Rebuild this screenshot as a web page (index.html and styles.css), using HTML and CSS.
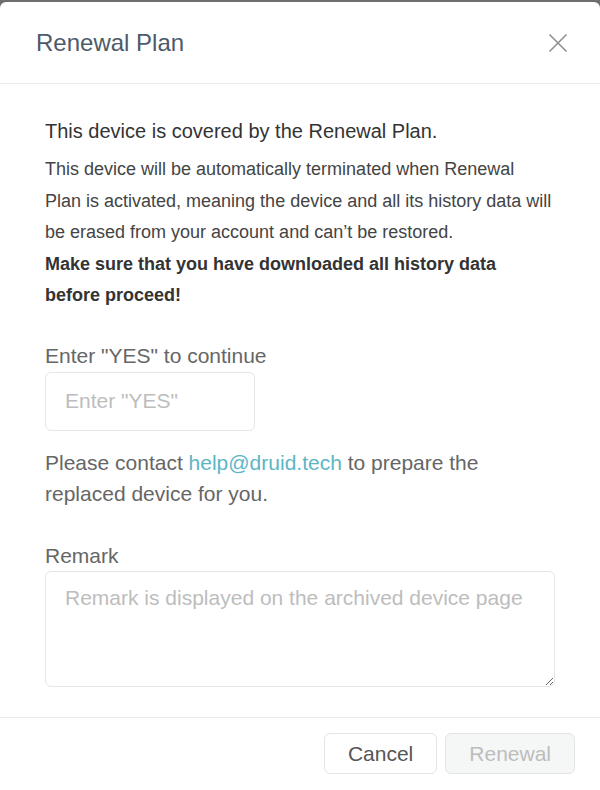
FILE: index.html
```html
<!DOCTYPE html>
<html lang="en">
<head>
  <meta charset="UTF-8" />
  <meta name="viewport" content="width=device-width, initial-scale=1.0" />
  <title>Renewal Plan</title>
  <link rel="stylesheet" href="styles.css">
</head>
<body>
  <div class="modal">
    <div class="modal-header">
      <h2 class="modal-title">Renewal Plan</h2>
      <button class="close" aria-label="Close">
        <svg width="20" height="20" viewBox="0 0 20 20">
          <path d="M1.5 1.5 L18.5 18.5 M18.5 1.5 L1.5 18.5" stroke="#8f8f8f" stroke-width="1.6" fill="none" />
        </svg>
      </button>
    </div>

    <div class="modal-body">
      <p class="lead">This device is covered by the Renewal Plan.</p>
      <p class="warning">
        This device will be automatically terminated when Renewal Plan is activated, meaning the device and all its history data will be erased from your account and can’t be restored.
        <strong>Make sure that you have downloaded all history data before proceed!</strong>
      </p>

      <div class="field field-yes">
        <label for="confirmYes">Enter "YES" to continue</label>
        <input type="text" id="confirmYes" class="yes-input" placeholder='Enter "YES"' />
      </div>

      <p class="contact">Please contact <a href="#">help@druid.tech</a> to prepare the replaced device for you.</p>

      <div class="field field-remark">
        <label for="remark">Remark</label>
        <textarea id="remark" placeholder="Remark is displayed on the archived device page"></textarea>
      </div>
    </div>

    <div class="modal-footer">
      <button class="btn">Cancel</button>
      <button class="btn btn-primary" disabled>Renewal</button>
    </div>
  </div>
</body>
</html>
```

FILE: styles.css
```css
body {
  margin: 0;
  background: #6e6e6e;
  font-family: "Liberation Sans", Arial, sans-serif;
}

.modal {
  margin-top: 2px;
  height: 788px;
  background: #fff;
  border-radius: 6px 6px 0 0;
  display: flex;
  flex-direction: column;
}

.modal-header {
  height: 81px;
  display: flex;
  align-items: center;
  justify-content: space-between;
  padding: 0 32px 0 36px;
  border-bottom: 1px solid #e9e9e9;
}
.modal-title {
  margin: 0;
  font-size: 24px;
  font-weight: normal;
  color: #4d5a6a;
}
.close {
  background: none;
  border: none;
  padding: 0;
  cursor: pointer;
  display: flex;
}

.modal-body {
  flex: 1;
  padding: 35px 45px 0 45px;
}
.lead {
  margin: 0 0 11px;
  font-size: 20px;
  line-height: 24px;
  color: #333;
}
.warning {
  margin: 0;
  font-size: 18px;
  line-height: 31.5px;
  color: #444;
}
.warning strong {
  display: block;
  color: #333;
}

.field label {
  display: block;
  font-size: 21px;
  line-height: 24px;
  color: #666;
}
.field-yes {
  margin-top: 32px;
}
.field-yes label {
  margin-bottom: 4px;
}
.field-remark {
  margin-top: 35px;
}
.field-remark label {
  margin-bottom: 3px;
}

.yes-input, textarea {
  box-sizing: border-box;
  border: 1px solid #e6e6e6;
  border-radius: 6px;
  font-family: inherit;
  font-size: 21px;
  line-height: 24px;
  color: #333;
  padding: 0 19px;
  outline: none;
}
.yes-input {
  width: 210px;
  height: 59px;
}
textarea {
  display: block;
  width: 100%;
  height: 116px;
  padding-top: 14px;
  resize: vertical;
}
::placeholder {
  color: #bdbdbd;
}

.contact {
  margin: 16px 0 0;
  font-size: 21px;
  line-height: 31px;
  color: #666;
}
.contact a {
  color: #5cb6c6;
  text-decoration: none;
}

.modal-footer {
  box-sizing: border-box;
  height: 73px;
  border-top: 1px solid #e9e9e9;
  display: flex;
  justify-content: flex-end;
  align-items: flex-start;
  gap: 8px;
  padding: 15px 25px 0 0;
}
.btn {
  height: 41px;
  padding: 0 23px;
  border: 1px solid #e4e4e4;
  border-radius: 6px;
  background: #fff;
  font-family: inherit;
  font-size: 21px;
  color: #555;
  cursor: pointer;
}
.btn-primary {
  background: #f5f6f6;
  color: #bdbdbd;
  cursor: not-allowed;
}
```
